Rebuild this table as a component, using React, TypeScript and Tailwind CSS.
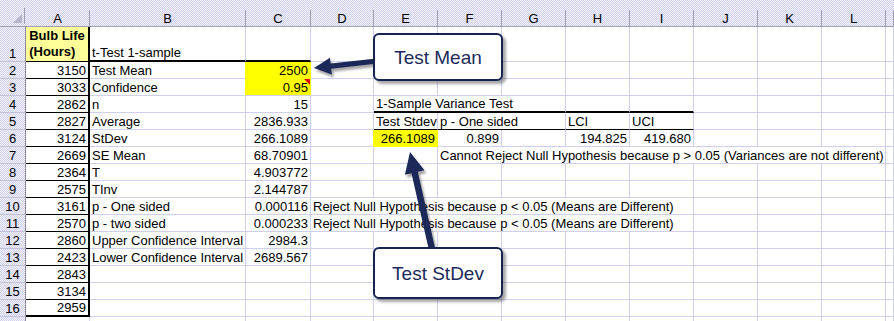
import React from "react"

type Cell = {
  col: number
  span?: number
  text?: React.ReactNode
  align?: "left" | "right" | "center"
  right?: string
  bottom?: string
  className?: string
  extra?: React.ReactNode
}

const GRID_R = "border-r border-r-[#d0d0ee]"
const GRID_B = "border-b border-b-[#d0d0ee]"
const YELLOW_R = "border-r border-r-[#ffff00]"
const YELLOW_B = "border-b border-b-[#ffff00]"
const PATTERN =
  "[background:repeating-conic-gradient(#d0d0ec_0_25%,#f4f4fc_0_50%)_0_0/2px_2px]"

const COL_LETTERS = ["A", "B", "C", "D", "E", "F", "G", "H", "I", "J", "K", "L", ""]

const bulbLife = [3150, 3033, 2862, 2827, 3124, 2669, 2364, 2575, 3161, 2570, 2860, 2423, 2843, 3134, 2959]

const stats: [string, string][] = [
  ["Test Mean", "2500"],
  ["Confidence", "0.95"],
  ["n", "15"],
  ["Average", "2836.933"],
  ["StDev", "266.1089"],
  ["SE Mean", "68.70901"],
  ["T", "4.903772"],
  ["TInv", "2.144787"],
  ["p - One sided", "0.000116"],
  ["p - two sided", "0.000233"],
  ["Upper Confidence Interval", "2984.3"],
  ["Lower Confidence Interval", "2689.567"],
]

const MEANS_MSG = "Reject Null Hypothesis because p < 0.05 (Means are Different)"
const VAR_MSG = "Cannot Reject Null Hypothesis because p > 0.05 (Variances are not different)"

function buildRows() {
  const rows: Record<number, Cell[]> = {}
  for (let r = 1; r <= 17; r++) rows[r] = []

  rows[1].push(
    {
      col: 0,
      text: (
        <>
          Bulb Life
          <br />
          (Hours)
        </>
      ),
      align: "center",
      className: "bg-[#ffff99] font-bold whitespace-normal leading-[16px] pb-[1px]",
      right: "border-r-2 border-r-black",
      bottom: "border-b border-b-black",
    },
    { col: 1, text: "t-Test 1-sample", bottom: "border-b-2 border-b-black" },
    { col: 2, bottom: "border-b-2 border-b-black" },
  )

  bulbLife.forEach((v, i) => {
    const r = i + 2
    rows[r].push({
      col: 0,
      text: v,
      align: "right",
      right: "border-r-2 border-r-black",
      bottom: r === 16 ? "border-b-2 border-b-black" : "border-b border-b-black",
    })
  })

  stats.forEach(([label, value], i) => {
    const r = i + 2
    const yellow = r === 2 || r === 3
    rows[r].push(
      { col: 1, text: label, right: yellow ? YELLOW_R : undefined },
      {
        col: 2,
        text: value,
        align: "right",
        className: yellow ? "bg-[#ffff00]" : "",
        right: yellow ? YELLOW_R : undefined,
        bottom: r === 2 ? YELLOW_B : undefined,
        extra:
          r === 3 ? (
            <span className="absolute top-0 right-0 w-0 h-0 border-l-[6px] border-l-transparent border-t-[6px] border-t-[#e00000]" />
          ) : null,
      },
    )
  })

  rows[10].push({ col: 3, span: 6, text: MEANS_MSG })
  rows[11].push({ col: 3, span: 6, text: MEANS_MSG })

  // 1-sample variance test block (E4:I7)
  const thick = "border-b-2 border-b-black"
  const thin = "border-b border-b-black"
  rows[4].push(
    { col: 4, span: 3, text: "1-Sample Variance Test", bottom: thick },
    { col: 7, bottom: thick },
    { col: 8, bottom: thick },
  )
  rows[5].push(
    { col: 4, text: "Test Stdev", bottom: thin },
    { col: 5, span: 2, text: "p - One sided", bottom: thin },
    { col: 7, text: "LCI", bottom: thin },
    { col: 8, text: "UCI", bottom: thin },
  )
  rows[6].push(
    { col: 3, right: YELLOW_R },
    { col: 4, text: "266.1089", align: "right", className: "bg-[#ffff00]", right: YELLOW_R, bottom: YELLOW_B },
    { col: 5, text: "0.899", align: "right" },
    { col: 7, text: "194.825", align: "right" },
    { col: 8, text: "419.680", align: "right" },
  )
  rows[7].push({ col: 5, span: 7, text: VAR_MSG })

  return rows
}

function arrowPoints(x1: number, y1: number, x2: number, y2: number, sw: number, hl: number, hw: number) {
  const dx = x2 - x1
  const dy = y2 - y1
  const len = Math.hypot(dx, dy)
  const ux = dx / len
  const uy = dy / len
  const nx = -uy
  const ny = ux
  const bx = x2 - ux * hl
  const by = y2 - uy * hl
  const pts = [
    [x1 + nx * sw, y1 + ny * sw],
    [bx + nx * sw, by + ny * sw],
    [bx + nx * hw, by + ny * hw],
    [x2, y2],
    [bx - nx * hw, by - ny * hw],
    [bx - nx * sw, by - ny * sw],
    [x1 - nx * sw, y1 - ny * sw],
  ]
  return pts.map((p) => p.map((v) => v.toFixed(1)).join(",")).join(" ")
}

function Callout({ label, className }: { label: string; className: string }) {
  return (
    <div
      className={`absolute left-[373px] w-[130px] rounded-[6px] border-2 border-[#17244f] bg-white shadow-[3px_3px_3px_rgba(0,0,0,0.35)] flex items-center justify-center text-[19px] text-[#1b2a5a] ${className}`}
    >
      {label}
    </div>
  )
}

export default function App() {
  const rows = buildRows()
  const alignCls = { left: "justify-start pl-[2px]", right: "justify-end pr-[2px]", center: "justify-center" }

  const meanArrow = arrowPoints(386, 60, 314, 68, 2.6, 17, 8.5)
  const stdevArrow = arrowPoints(434, 258, 410, 152, 3.2, 21, 10)

  return (
    <div className="relative w-[894px] h-[321px] overflow-hidden bg-white text-black text-[13px] leading-[15px] font-['Liberation_Sans',Arial,sans-serif]">
      <div className="grid grid-cols-[26px_64px_156px_65px_63px_64px_64px_64px_64px_64px_64px_64px_64px_1fr] grid-rows-[27px_35px_repeat(16,17px)]">
        {/* header row */}
        <div className={`${PATTERN} border-b border-b-[#9e9eb4] flex items-end justify-end pb-[2px] pr-[1px]`}>
          <div className="h-[16px] w-full border-r border-r-[#9e9eb4] flex items-end justify-end pr-[2px] pb-[1px]">
            <span className="w-0 h-0 border-l-[9px] border-l-transparent border-b-[9px] border-b-[#b6b6ca]" />
          </div>
        </div>
        {COL_LETTERS.map((l, i) => (
          <div key={i} className={`${PATTERN} border-b border-b-[#9e9eb4] flex items-end`}>
            <div className="h-[16px] w-full border-r border-r-[#9e9eb4] flex items-end justify-center">{l}</div>
          </div>
        ))}

        {Array.from({ length: 17 }, (_, idx) => {
          const r = idx + 1
          const defined = rows[r]
          const out: React.ReactNode[] = [
            <div
              key={`h${r}`}
              className={`${PATTERN} border-r border-r-[#8c8c9e] border-b border-b-[#c0c0da] flex items-end justify-center`}
            >
              {r <= 16 ? r : ""}
            </div>,
          ]
          let c = 0
          while (c < 13) {
            const cell = defined.find((d) => d.col === c)
            const span = cell?.span ?? 1
            const spanCls =
              span === 2 ? "col-span-2" : span === 3 ? "col-span-3" : span === 6 ? "col-span-6" : span === 7 ? "col-span-7" : ""
            out.push(
              <div
                key={`${r}-${c}`}
                className={`relative flex items-end overflow-hidden whitespace-nowrap ${spanCls} ${cell?.right ?? GRID_R} ${cell?.bottom ?? GRID_B} ${alignCls[cell?.align ?? "left"]} ${cell?.className ?? ""}`}
              >
                {cell?.text}
                {cell?.extra}
              </div>,
            )
            c += span
          }
          return <React.Fragment key={r}>{out}</React.Fragment>
        })}
      </div>

      {/* callout arrows */}
      <svg className="absolute left-0 top-0 pointer-events-none" width="894" height="321">
        <defs>
          <filter id="soft" x="-20%" y="-20%" width="140%" height="140%">
            <feGaussianBlur stdDeviation="1.2" />
          </filter>
        </defs>
        <g transform="translate(2,3)" filter="url(#soft)" fill="rgba(0,0,0,0.35)">
          <polygon points={meanArrow} />
          <polygon points={stdevArrow} />
        </g>
        <g fill="#1b2858">
          <polygon points={meanArrow} />
          <polygon points={stdevArrow} />
        </g>
      </svg>

      <Callout label="Test Mean" className="top-[33px] h-[48px]" />
      <Callout label="Test StDev" className="top-[247px] h-[52px]" />
    </div>
  )
}
